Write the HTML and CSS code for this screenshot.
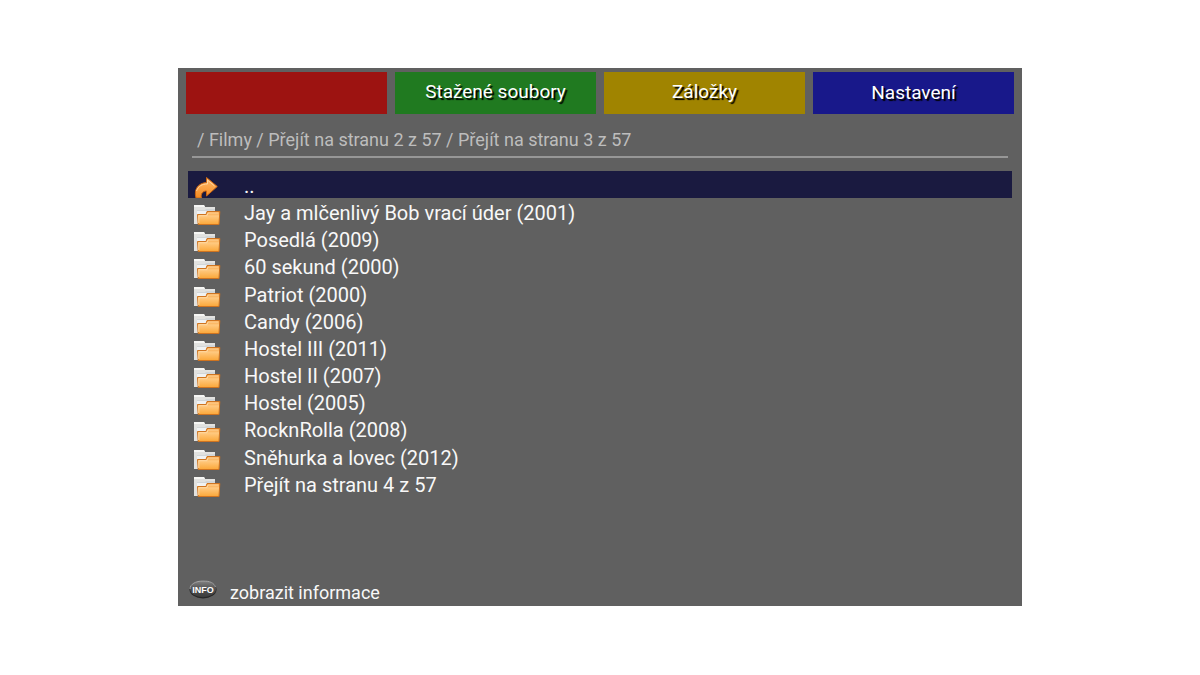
FILE: index.html
```html
<!DOCTYPE html>
<html lang="cs">
<head>
<meta charset="utf-8">
<meta name="viewport" content="width=device-width, initial-scale=1">
<title>Filmy</title>
<link rel="stylesheet" href="styles.css">
</head>
<body>
<svg class="defs" aria-hidden="true">
  <defs>
    <linearGradient id="orange" x1="0" y1="0" x2="0" y2="1">
      <stop offset="0" stop-color="#f59a35"/><stop offset=".35" stop-color="#ffc980"/><stop offset="1" stop-color="#fba738"/>
    </linearGradient>
    <linearGradient id="arrow" x1="0" y1="0" x2="0" y2="1">
      <stop offset="0" stop-color="#ffbd70"/><stop offset="1" stop-color="#f58a1f"/>
    </linearGradient>
    <linearGradient id="metal" x1="0" y1="0" x2="0" y2="1">
      <stop offset="0" stop-color="#858585"/><stop offset=".5" stop-color="#505050"/><stop offset="1" stop-color="#3c3c3c"/>
    </linearGradient>
    <symbol id="folder" viewBox="0 0 27 21">
      <path d="M0 0H10L11 2H21V9H4V19H0Z" fill="#e2e2e0"/>
      <path d="M0 0H10L11 2H0Z" fill="#f6f6f4"/>
      <path d="M3 5H11L12 4H21V6H3Z" fill="#d2d6d8"/>
      <path d="M3 6H22V9H3Z" fill="#f0f2f3"/>
      <path d="M3.500 9.500H12L13 6.500H25.800L25 19.500H4.200Z" fill="url(#orange)" stroke="#cf7420"/>
      <path d="M4.800 18V10.700H13L14 8H24.500" fill="none" stroke="#ffd9a4"/>
    </symbol>
    <symbol id="up" viewBox="0 0 26 21">
      <path d="M1.500 21C-1 12 4 6 12 5.500V.5L22.800 9.500L12 19V14C8 14 6 17 7 21Z" fill="url(#arrow)" stroke="#c96412"/>
      <path d="M2 14C4 9 7.500 7 13 7V3L20 9" fill="none" stroke="#ffd5a0"/>
    </symbol>
  </defs>
</svg>
<main class="panel">
  <nav class="tabs" aria-label="Funkce">
    <button class="tab red" type="button" aria-label="Červené tlačítko"></button>
    <button class="tab green" type="button">Stažené soubory</button>
    <button class="tab yellow" type="button">Záložky</button>
    <button class="tab blue" type="button">Nastavení</button>
  </nav>
  <div class="path">/ Filmy / Přejít na stranu 2 z 57 / Přejít na stranu 3 z 57</div>
  <ul class="list">
    <li class="row selected"><svg class="icon"><use href="#up"/></svg><span>..</span></li>
    <li class="row"><svg class="icon"><use href="#folder"/></svg><span>Jay a mlčenlivý Bob vrací úder (2001)</span></li>
    <li class="row"><svg class="icon"><use href="#folder"/></svg><span>Posedlá (2009)</span></li>
    <li class="row"><svg class="icon"><use href="#folder"/></svg><span>60 sekund (2000)</span></li>
    <li class="row"><svg class="icon"><use href="#folder"/></svg><span>Patriot (2000)</span></li>
    <li class="row"><svg class="icon"><use href="#folder"/></svg><span>Candy (2006)</span></li>
    <li class="row"><svg class="icon"><use href="#folder"/></svg><span>Hostel III (2011)</span></li>
    <li class="row"><svg class="icon"><use href="#folder"/></svg><span>Hostel II (2007)</span></li>
    <li class="row"><svg class="icon"><use href="#folder"/></svg><span>Hostel (2005)</span></li>
    <li class="row"><svg class="icon"><use href="#folder"/></svg><span>RocknRolla (2008)</span></li>
    <li class="row"><svg class="icon"><use href="#folder"/></svg><span>Sněhurka a lovec (2012)</span></li>
    <li class="row"><svg class="icon"><use href="#folder"/></svg><span>Přejít na stranu 4 z 57</span></li>
  </ul>
  <footer class="footer">
    <svg class="info" viewBox="0 0 28 19" role="img" aria-label="INFO">
      <ellipse cx="14" cy="9.500" rx="13.500" ry="9" fill="#272727"/>
      <ellipse cx="14" cy="9" rx="13" ry="8.300" fill="url(#metal)"/>
      <path d="M1 9C1 4 7 1 14 1S25 3 26.500 7" fill="none" stroke="#a5a5a5"/>
      <text class="info-text" x="14" y="13" text-anchor="middle">INFO</text>
    </svg>
    <span>zobrazit informace</span>
  </footer>
</main>
</body>
</html>
```
FILE: styles.css
```css
* {
  box-sizing: border-box;
}

body {
  margin: 0;
  padding: 68px 178px;
  background: #fff;
  font-family: Roboto, "Liberation Sans", sans-serif;
}

.defs {
  position: absolute;
  width: 0;
  height: 0;
}

.panel {
  display: flex;
  flex-direction: column;
  min-height: 538px;
  padding: 4px 8px 2px;
  background: #606060;
  color: #f8f8f8;
}

.tabs {
  display: grid;
  grid-template-columns: repeat(4, 1fr);
  gap: 8px;
}

.tab {
  height: 42px;
  padding: 0 0 3px;
  border: 0;
  color: #fff;
  font: 19px/24px Roboto, "Liberation Sans", sans-serif;
  text-shadow: 2px 2px 1px #000;
}

.red { background: #9d1311; }
.green { background: #207a20; }
.yellow { background: #a08400; }
.blue { padding: 0; background: #18188a; }

.path {
  margin: 13px 6px 0;
  padding: 1px 5px 4px;
  border-bottom: 2px solid #979797;
  color: #bdbdbd;
  font-size: 18px;
  line-height: 24px;
}

.list {
  display: grid;
  grid-template-rows: repeat(12, 1fr);
  height: 326px;
  margin: 13px 2px 0;
  padding: 0;
  list-style: none;
  font-size: 20px;
  line-height: 27px;
}

.row {
  display: flex;
  gap: 23px;
  min-height: 0;
  padding: 0 6px;
}

.row span {
  padding-top: 2px;
}

.selected {
  overflow: hidden;
  background: #1a1a40;
}

.icon {
  flex: none;
  width: 27px;
  height: 21px;
  margin-top: 7px;
}

.selected .icon {
  margin-top: 6px;
}

.footer {
  display: flex;
  align-items: flex-start;
  gap: 13px;
  margin-top: auto;
  padding-left: 3px;
  font-size: 18px;
  line-height: 22px;
}

.footer span {
  padding-top: 2px;
}

.info {
  width: 28px;
  height: 19px;
}

.info-text {
  fill: #fff;
  font: bold 9px "Liberation Sans", sans-serif;
}
```
